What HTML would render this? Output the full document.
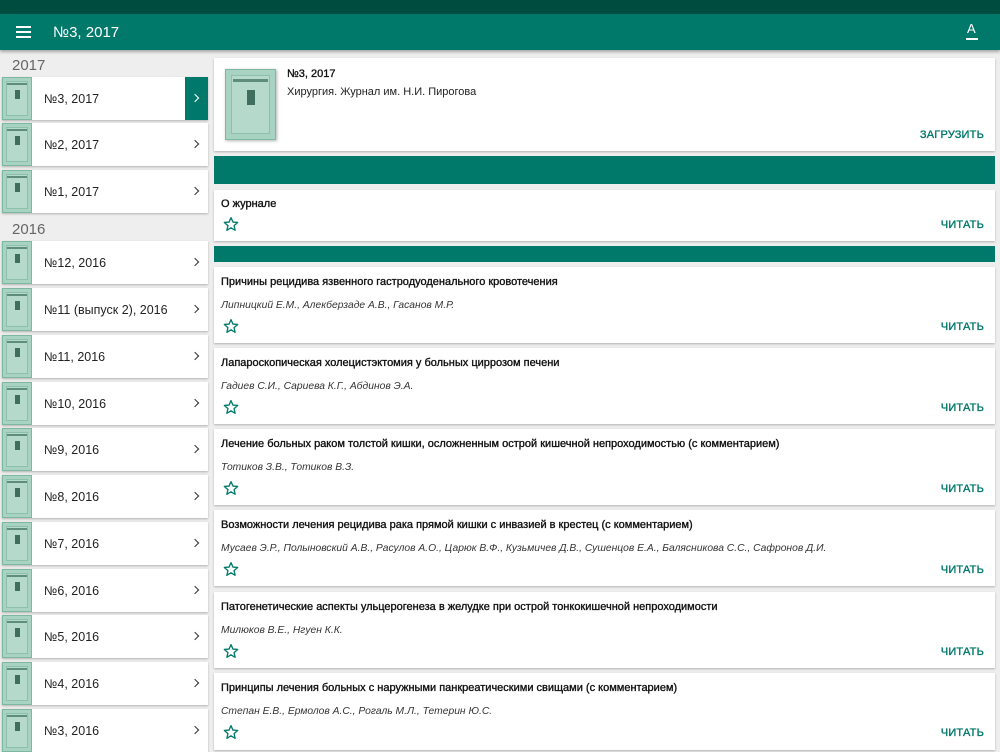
<!DOCTYPE html>
<html><head><meta charset="utf-8"><style>
*{margin:0;padding:0;box-sizing:border-box}
body{width:1000px;height:750px;overflow:hidden;background:#eeeeee;font-family:"Liberation Sans","Noto Sans CJK SC",sans-serif;position:relative}
.a{position:absolute}
.status{left:0;top:0;width:1000px;height:14px;background:#004d40}
.bar{left:0;top:14px;width:1000px;height:36px;background:#00796b;box-shadow:0 2px 3px rgba(0,0,0,.3);z-index:2}
.bar .t{left:53px;top:10px;color:#fff;font-size:15px}
.left{left:0;top:50px;width:210px;height:700px;background:#eeeeee}
.yr{left:12px;font-size:15px;color:#666}
.it{left:2px;width:206px;height:43px;background:#fff;box-shadow:0 1px 2px rgba(0,0,0,.25)}
.it .n{position:absolute;left:42px;top:15px;font-size:12.5px;color:#222}
.it .c{position:absolute;right:10px;top:18px;width:6px;height:6px;border-right:1.6px solid #333;border-top:1.6px solid #333;transform:rotate(45deg)}
.it.sel .g{position:absolute;right:0;top:0;width:23px;height:43px;background:#00796b}
.it.sel .c{border-color:#fff}
.th{position:absolute;left:0;top:0;width:30px;height:43px;background:#a8d3c3;border:1px solid #7db8a3}
.th i{position:absolute;left:3px;top:3px;width:22px;height:35px;border:1px solid #8cc0ad;background:#b5dacc}
.th b{position:absolute;left:4px;top:5px;width:20px;height:2px;background:#5e8d7d}
.th s{position:absolute;left:12px;top:12px;width:5px;height:9px;background:#3f6e5e}
.card{left:214px;width:781px;background:#fff;box-shadow:0 1px 2px rgba(0,0,0,.25)}
.gb{left:214px;width:781px;background:#00796b}
.ti{position:absolute;left:7px;font-size:11px;color:#111;-webkit-text-stroke:0.35px #111}
.au{position:absolute;left:7px;font-size:10.3px;font-style:italic;color:#333}
.btn{position:absolute;right:11px;font-size:11px;color:#00796b;letter-spacing:.2px;-webkit-text-stroke:0.35px #00796b}
.star{position:absolute;left:9px;top:51px;width:16px;height:16px}
</style></head><body>
<div class="a status"></div>
<div class="a bar">
<div class="a" style="left:16px;top:12px;width:15px;height:2px;background:#fff;box-shadow:0 5px 0 #fff,0 10px 0 #fff"></div>
<div class="a t">№3, 2017</div>
<div class="a" style="left:967px;top:7px;color:#fff;font-size:13px">A</div>
<div class="a" style="left:966px;top:24px;width:12px;height:1.5px;background:#fff"></div>
</div>
<div class="a left"></div>
<div class="a yr" style="top:57px">2017</div>
<div class="a yr" style="top:221px">2016</div>

<div class="a it sel" style="top:77px"><div class="th"><i></i><b></b><s></s></div><div class="n">№3, 2017</div><div class="g"></div><div class="c"></div></div>
<div class="a it" style="top:123px"><div class="th"><i></i><b></b><s></s></div><div class="n">№2, 2017</div><div class="c"></div></div>
<div class="a it" style="top:170px"><div class="th"><i></i><b></b><s></s></div><div class="n">№1, 2017</div><div class="c"></div></div>
<div class="a it" style="top:241px"><div class="th"><i></i><b></b><s></s></div><div class="n">№12, 2016</div><div class="c"></div></div>
<div class="a it" style="top:288px"><div class="th"><i></i><b></b><s></s></div><div class="n">№11 (выпуск 2), 2016</div><div class="c"></div></div>
<div class="a it" style="top:335px"><div class="th"><i></i><b></b><s></s></div><div class="n">№11, 2016</div><div class="c"></div></div>
<div class="a it" style="top:382px"><div class="th"><i></i><b></b><s></s></div><div class="n">№10, 2016</div><div class="c"></div></div>
<div class="a it" style="top:428px"><div class="th"><i></i><b></b><s></s></div><div class="n">№9, 2016</div><div class="c"></div></div>
<div class="a it" style="top:475px"><div class="th"><i></i><b></b><s></s></div><div class="n">№8, 2016</div><div class="c"></div></div>
<div class="a it" style="top:522px"><div class="th"><i></i><b></b><s></s></div><div class="n">№7, 2016</div><div class="c"></div></div>
<div class="a it" style="top:569px"><div class="th"><i></i><b></b><s></s></div><div class="n">№6, 2016</div><div class="c"></div></div>
<div class="a it" style="top:615px"><div class="th"><i></i><b></b><s></s></div><div class="n">№5, 2016</div><div class="c"></div></div>
<div class="a it" style="top:662px"><div class="th"><i></i><b></b><s></s></div><div class="n">№4, 2016</div><div class="c"></div></div>
<div class="a it" style="top:709px"><div class="th"><i></i><b></b><s></s></div><div class="n">№3, 2016</div><div class="c"></div></div>

<div class="a card" style="top:58px;height:93px">
<div class="th" style="left:11px;top:11px;width:51px;height:71px;box-shadow:1px 1px 3px rgba(0,0,0,.3)"><i style="left:5px;top:5px;width:39px;height:59px"></i><b style="left:7px;top:9px;width:35px;height:3px"></b><s style="left:21px;top:20px;width:8px;height:15px"></s></div>
<div class="ti" style="left:73px;top:10px">№3, 2017</div>
<div class="au" style="left:73px;top:28px;font-style:normal;font-size:11px;color:#222">Хирургия. Журнал им. Н.И. Пирогова</div>
<div class="btn" style="top:71px">ЗАГРУЗИТЬ</div>
</div>
<div class="a gb" style="top:156px;height:28px"></div>
<div class="a card" style="top:190px;height:51px">
<div class="ti" style="top:8px">О журнале</div>
<svg class="star" style="top:26px" viewBox="0 0 24 24"><path d="M12 2.5l2.9 6.6 7.1.6-5.4 4.7 1.6 7-6.2-3.7-6.2 3.7 1.6-7L2 9.7l7.1-.6z" fill="none" stroke="#00796b" stroke-width="2" stroke-linejoin="round"/></svg>
<div class="btn" style="top:29px">ЧИТАТЬ</div>
</div>
<div class="a gb" style="top:246px;height:16px"></div>

<div class="a card" style="top:267px;height:76px"><div class="ti" style="top:9px">Причины рецидива язвенного гастродуоденального кровотечения</div><div class="au" style="top:33px">Липницкий Е.М., Алекберзаде А.В., Гасанов М.Р.</div><svg class="star" viewBox="0 0 24 24"><path d="M12 2.5l2.9 6.6 7.1.6-5.4 4.7 1.6 7-6.2-3.7-6.2 3.7 1.6-7L2 9.7l7.1-.6z" fill="none" stroke="#00796b" stroke-width="2" stroke-linejoin="round"/></svg><div class="btn" style="top:54px">ЧИТАТЬ</div></div>
<div class="a card" style="top:348px;height:76px"><div class="ti" style="top:9px">Лапароскопическая холецистэктомия у больных циррозом печени</div><div class="au" style="top:33px">Гадиев С.И., Сариева К.Г., Абдинов Э.А.</div><svg class="star" viewBox="0 0 24 24"><path d="M12 2.5l2.9 6.6 7.1.6-5.4 4.7 1.6 7-6.2-3.7-6.2 3.7 1.6-7L2 9.7l7.1-.6z" fill="none" stroke="#00796b" stroke-width="2" stroke-linejoin="round"/></svg><div class="btn" style="top:54px">ЧИТАТЬ</div></div>
<div class="a card" style="top:429px;height:76px"><div class="ti" style="top:9px">Лечение больных раком толстой кишки, осложненным острой кишечной непроходимостью (с комментарием)</div><div class="au" style="top:33px">Тотиков З.В., Тотиков В.З.</div><svg class="star" viewBox="0 0 24 24"><path d="M12 2.5l2.9 6.6 7.1.6-5.4 4.7 1.6 7-6.2-3.7-6.2 3.7 1.6-7L2 9.7l7.1-.6z" fill="none" stroke="#00796b" stroke-width="2" stroke-linejoin="round"/></svg><div class="btn" style="top:54px">ЧИТАТЬ</div></div>
<div class="a card" style="top:510px;height:76px"><div class="ti" style="top:9px">Возможности лечения рецидива рака прямой кишки с инвазией в крестец (с комментарием)</div><div class="au" style="top:33px">Мусаев Э.Р., Полыновский А.В., Расулов А.О., Царюк В.Ф., Кузьмичев Д.В., Сушенцов Е.А., Балясникова С.С., Сафронов Д.И.</div><svg class="star" viewBox="0 0 24 24"><path d="M12 2.5l2.9 6.6 7.1.6-5.4 4.7 1.6 7-6.2-3.7-6.2 3.7 1.6-7L2 9.7l7.1-.6z" fill="none" stroke="#00796b" stroke-width="2" stroke-linejoin="round"/></svg><div class="btn" style="top:54px">ЧИТАТЬ</div></div>
<div class="a card" style="top:592px;height:76px"><div class="ti" style="top:9px">Патогенетические аспекты ульцерогенеза в желудке при острой тонкокишечной непроходимости</div><div class="au" style="top:33px">Милюков В.Е., Нгуен К.К.</div><svg class="star" viewBox="0 0 24 24"><path d="M12 2.5l2.9 6.6 7.1.6-5.4 4.7 1.6 7-6.2-3.7-6.2 3.7 1.6-7L2 9.7l7.1-.6z" fill="none" stroke="#00796b" stroke-width="2" stroke-linejoin="round"/></svg><div class="btn" style="top:54px">ЧИТАТЬ</div></div>
<div class="a card" style="top:673px;height:77px"><div class="ti" style="top:9px">Принципы лечения больных с наружными панкреатическими свищами (с комментарием)</div><div class="au" style="top:33px">Степан Е.В., Ермолов А.С., Рогаль М.Л., Тетерин Ю.С.</div><svg class="star" viewBox="0 0 24 24"><path d="M12 2.5l2.9 6.6 7.1.6-5.4 4.7 1.6 7-6.2-3.7-6.2 3.7 1.6-7L2 9.7l7.1-.6z" fill="none" stroke="#00796b" stroke-width="2" stroke-linejoin="round"/></svg><div class="btn" style="top:54px">ЧИТАТЬ</div></div>
</body></html>
